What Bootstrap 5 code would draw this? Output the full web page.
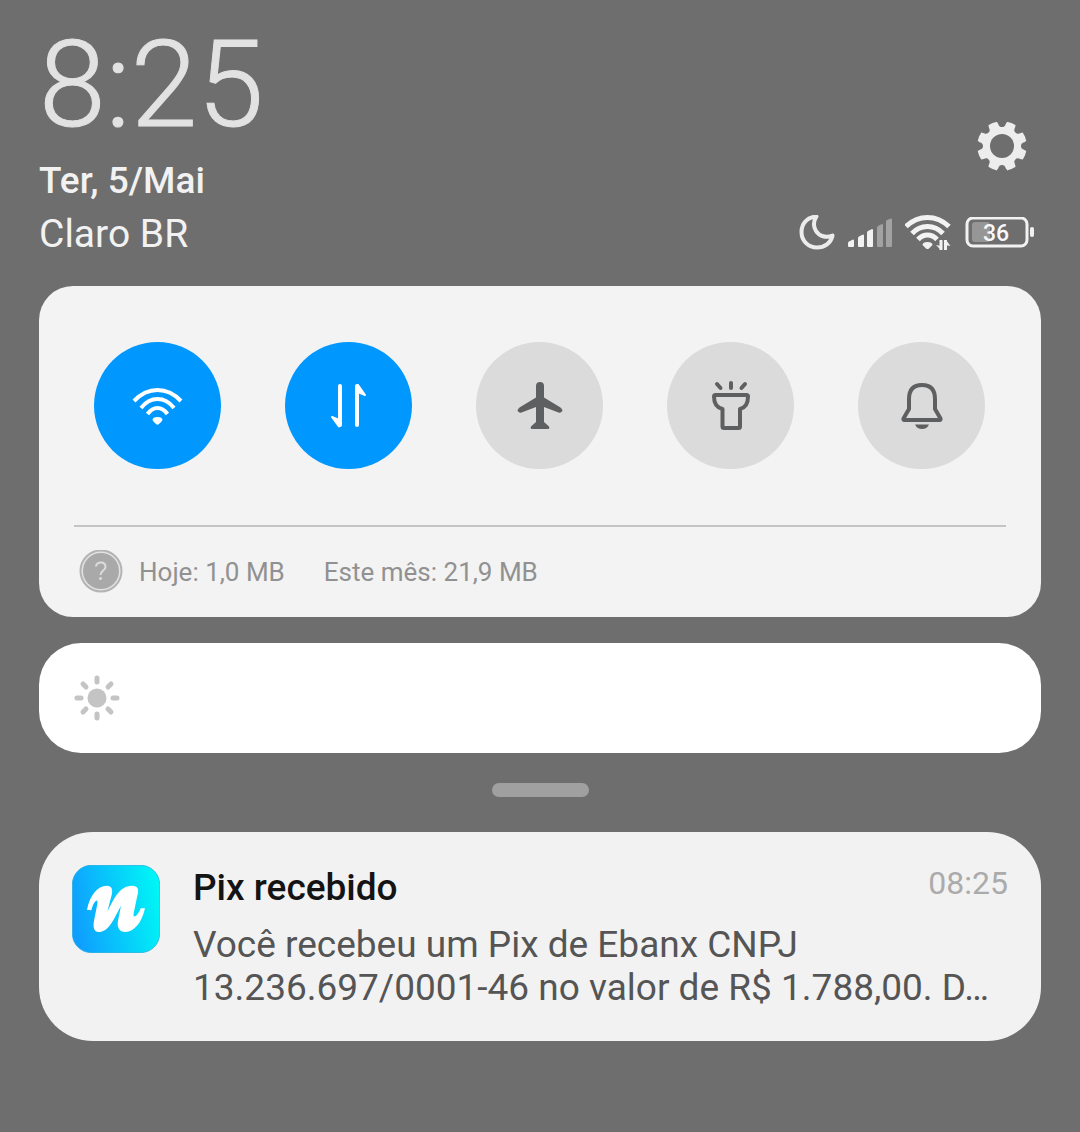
<!DOCTYPE html>
<html lang="pt-BR">
<head>
<meta charset="utf-8">
<meta name="viewport" content="width=device-width, initial-scale=1">
<title>Central de notificações</title>
<link href="https://cdn.jsdelivr.net/npm/bootstrap@5.3.0/dist/css/bootstrap.min.css" rel="stylesheet">
<style>
  body { background: #6e6e6e; color: #f2f2f2; font-family: Roboto, "Liberation Sans", sans-serif; }
  svg { display: block; flex: none; }
  .shade { padding: 21px 39px 0; }
  .clock { font-size: 120px; line-height: 128px; font-weight: 300; color: #e2e2e2; -webkit-text-stroke: 1px #e2e2e2; }
  .today { font-size: 37px; line-height: 52px; font-weight: 500; margin-top: 6px; }
  .carrier { font-size: 39px; line-height: 54px; }
  .top-right { padding-right: 6px; gap: 44px; }
  .status { gap: 13px; padding-bottom: 10px; }
  .settings { margin-right: 8px; }
  .panel { background: #f3f3f3; border-radius: 34px; margin-top: 25px; padding: 56px 35px 0; }
  .toggles { padding: 0 21px 56px 20px; }
  .toggle { width: 127px; height: 127px; background: #dbdbdb; color: #5e5f60; }
  .toggle.active { background: #0098ff; color: #fff; }
  .usage { border-top: 2px solid #c3c4c3; height: 92px; padding: 0 5px; font-size: 26px; color: #919191; }
  .usage-month { margin-left: 39px; }
  .brightness { background: #fff; height: 110px; border-radius: 42px; margin-top: 26px; padding: 0 35px; color: #c4c4c4; }
  .level { appearance: none; background: transparent; height: 60px; }
  .level::-webkit-slider-thumb { appearance: none; width: 1px; height: 60px; background: transparent; }
  .grip { width: 97px; height: 14px; border-radius: 7px; background: #a0a0a0; margin: 30px auto 35px; }
  .notice { background: #f2f2f2; border-radius: 54px; padding: 33px 33px 32px; gap: 33px; }
  .notice-title { font-size: 37px; line-height: 46px; font-weight: 500; color: #141414; }
  .notice-time { font-size: 32px; line-height: 36px; color: #ababab; }
  .notice-text { font-size: 37px; line-height: 43px; color: #555; margin: 12px 0 0; }
</style>
</head>
<body>
<main class="shade">
  <header class="d-flex justify-content-between align-items-end">
    <div>
      <div class="clock">8:25</div>
      <div class="today">Ter, 5/Mai</div>
      <div class="carrier">Claro BR</div>
    </div>
    <div class="top-right d-flex flex-column align-items-end">
      <button class="settings btn p-0 border-0" type="button" aria-label="Configurações">
        <svg width="50" height="50" viewBox="-25 -25 50 50">
          <defs>
            <path id="notch" d="M-5.500-27L-4.800-23.600C-3.200-22.600-3.800-19 0-19S3.200-22.600 4.800-23.600L5.500-27Z"/>
            <mask id="gear" maskUnits="userSpaceOnUse" x="-25" y="-25" width="50" height="50">
              <circle r="24.800" fill="#fff"/><circle r="12"/>
              <use href="#notch"/><use href="#notch" transform="rotate(45)"/><use href="#notch" transform="rotate(90)"/><use href="#notch" transform="rotate(135)"/>
              <use href="#notch" transform="rotate(180)"/><use href="#notch" transform="rotate(225)"/><use href="#notch" transform="rotate(270)"/><use href="#notch" transform="rotate(315)"/>
            </mask>
          </defs>
          <rect x="-25" y="-25" width="50" height="50" fill="#ededed" mask="url(#gear)"/>
        </svg>
      </button>
      <div class="status d-flex align-items-center">
        <svg width="36" height="36" viewBox="0 1 36 36" fill="none" stroke="#ececec" stroke-width="4" stroke-linejoin="round">
          <path d="M17.500 2.500C8 3 2.500 10 2.500 18C2.500 27 9.500 33.500 18 33.500C25.500 33.500 32 29 33.500 21.500C27 24.500 20 22 17 17C14 12 14.500 7 17.500 2.500Z"/>
        </svg>
        <svg width="44" height="30" viewBox="0 1 44 30" fill="#f2f2f2">
          <path d="M0 29V26Q0 25 1 24.500L5 22.500Q6 22.500 6 23.500V29Q6 30 5 30H1Q0 30 0 29Z"/>
          <path d="M10 29V21Q10 20 11 19.500L15 17.500Q16 17.500 16 18.500V29Q16 30 15 30H11Q10 30 10 29Z"/>
          <path d="M19 29V15.500Q19 14.500 20 14L24 12Q25 12 25 13V29Q25 30 24 30H20Q19 30 19 29Z"/>
          <path fill="#a2a2a2" d="M29 29V10.500Q29 9.500 30 9L34 7Q35 7 35 8V29Q35 30 34 30H30Q29 30 29 29Z"/>
          <path fill="#a2a2a2" d="M38 29V5Q38 3.500 39 3L43 1.500Q44 1.500 44 2.500V29Q44 30 43 30H39Q38 30 38 29Z"/>
        </svg>
        <svg width="47" height="36" viewBox="1 1 47 36" fill="none" stroke="#f2f2f2" stroke-width="5">
          <path d="M2 12.500Q11.500 3.500 23.500 3.500T45 12.500M8 19.500Q14.500 12.500 23.500 12.500T39 19.500M14 25.500Q18 21 23.500 21T33 25.500"/>
          <path fill="#f2f2f2" stroke="none" d="M18.500 31Q18.500 28 23.500 28T28.500 31L25 34.500Q23.500 35.500 22 34.500Z"/>
          <path stroke-width="3" d="M37 26V36M41.500 26V36"/>
          <path fill="#f2f2f2" stroke="none" d="M32 31L37 32V36ZM41 26H42L46.500 32L41 31Z"/>
        </svg>
        <svg width="70" height="32" viewBox="0 1 70 32">
          <rect x="7" y="6" width="18" height="20" rx="3" fill="#969696"/>
          <rect x="2" y="2" width="60" height="28" rx="6" fill="none" stroke="#f2f2f2" stroke-width="3"/>
          <rect x="65" y="11" width="4" height="10" rx="2" fill="#f2f2f2"/>
          <text x="31" y="25" text-anchor="middle" font-size="23" font-weight="500" fill="#f8f8f8">36</text>
        </svg>
      </div>
    </div>
  </header>

  <section class="panel">
    <div class="toggles d-flex justify-content-between">
      <button class="toggle active btn rounded-circle border-0 p-0 d-flex align-items-center justify-content-center" type="button" aria-label="Wi-Fi" aria-pressed="true">
        <svg width="51" height="41" viewBox="0 0 51 41" fill="none" stroke="currentColor" stroke-width="4">
          <path d="M2 16Q12.500 5 25.500 5T49 16M9 23Q16 14 25.500 14T42 23M15.500 29Q20 23 25.500 23T35.500 29"/>
          <path fill="currentColor" stroke="none" d="M20.500 35Q20.500 32 25.500 32T30.500 35Q29.500 37 27 39Q25.500 40.500 24 39Q21.500 37 20.500 35Z"/>
        </svg>
      </button>
      <button class="toggle active btn rounded-circle border-0 p-0 d-flex align-items-center justify-content-center" type="button" aria-label="Dados móveis" aria-pressed="true">
        <svg width="37" height="45" viewBox="0 0 37 45" fill="none" stroke="currentColor" stroke-width="4" stroke-linecap="round" stroke-linejoin="round">
          <path d="M10 3V42M27 42V3"/>
          <path fill="currentColor" stroke-width="2" d="M2 34L9 37V43.500ZM28 2L35 12L28 9Z"/>
        </svg>
      </button>
      <button class="toggle btn rounded-circle border-0 p-0 d-flex align-items-center justify-content-center" type="button" aria-label="Modo avião" aria-pressed="false">
        <svg width="46" height="50" viewBox="0 0 46 50" fill="currentColor">
          <path d="M19 5Q19 1 23 1T27 5V16.500L43.500 26.500Q46 28.500 45 30.500Q44 32 41.500 31.500L27 26V41L32 45.500Q33 48 31 48H15Q13 48 14 45.500L19 41V26L4.500 31.500Q2 32 1 30.500Q0 28.500 2.500 26.500L19 16.500Z"/>
        </svg>
      </button>
      <button class="toggle btn rounded-circle border-0 p-0 d-flex align-items-center justify-content-center" type="button" aria-label="Lanterna" aria-pressed="false">
        <svg width="38" height="50" viewBox="0 0 38 50" fill="none" stroke="currentColor" stroke-width="4" stroke-linejoin="round" stroke-linecap="round">
          <path d="M5 3L8.500 7M19 2V7M33 3L29.500 7M3.500 14H34.500Q36 14 36 15.500Q36 26 28 28V45.500Q28 47 26.500 47H12Q10.500 47 10.500 45.500V28Q2 26 2 15.500Q2 14 3.500 14Z"/>
        </svg>
      </button>
      <button class="toggle btn rounded-circle border-0 p-0 d-flex align-items-center justify-content-center" type="button" aria-label="Silencioso" aria-pressed="false">
        <svg width="42" height="48" viewBox="0 0 42 48" fill="none" stroke="currentColor" stroke-width="4" stroke-linejoin="round">
          <path d="M8 17Q8 3 21 3T34 17V27L39.500 36.500Q40 38 38.500 38H3.500Q2 38 2.500 36.500L8 27Z"/>
          <path fill="currentColor" stroke="none" d="M14 42.500H28Q26 47 21 47T14 42.500Z"/>
        </svg>
      </button>
    </div>
    <div class="usage d-flex align-items-center">
      <svg width="44" height="44" viewBox="0 1 44 44" fill="none">
        <circle cx="22" cy="22" r="20.500" fill="#e2e2e2" stroke="#b4b4b4" stroke-width="2"/>
        <circle cx="22" cy="22" r="18" fill="#a9a9a9"/>
        <path d="M17 17.500Q17.500 13.500 22 13.500T26.500 18C26.500 21.500 21.500 21.500 21.500 26" stroke="#dcdcdc" stroke-width="2"/>
        <circle cx="21.500" cy="29.500" r="1.500" fill="#dcdcdc"/>
      </svg>
      <span class="ms-3">Hoje: 1,0 MB</span>
      <span class="usage-month">Este mês: 21,9 MB</span>
    </div>
  </section>

  <section class="brightness d-flex align-items-center">
    <label for="level" aria-label="Brilho">
      <svg width="46" height="46" viewBox="-23 -23 46 46" fill="currentColor" stroke="currentColor" stroke-width="5" stroke-linecap="round">
        <circle r="9.500" stroke="none"/>
        <path d="M0-20V-16M0 20V16M-20 0H-16M20 0H16M-14-14L-11-11M14 14L11 11M14-14L11-11M-14 14L-11 11"/>
      </svg>
    </label>
    <input class="level flex-grow-1" id="level" type="range" min="0" max="100" value="0">
  </section>

  <div class="grip"></div>

  <article class="notice d-flex align-items-start">
    <svg width="88" height="88" viewBox="0 0 264 264">
      <defs>
        <linearGradient id="brand" x1="0" y1="0.600" x2="1" y2="0.400">
          <stop offset="0" stop-color="#0f9dff"/><stop offset="1" stop-color="#00f5f6"/>
        </linearGradient>
      </defs>
      <rect x="1" y="1" width="262" height="262" rx="57" fill="url(#brand)" stroke="#1ba9d8" stroke-width="2"/>
      <path fill="#fff" d="M45 134C54 90 77 62 104 62C120 62 123 74 119 90L106 140C124 104 142 62 180 62C198 62 202 74 196 92L185 145C182 162 196 156 206 130H219C210 172 187 201 160 201C142 201 134 186 138 167L147 122C130 152 113 201 80 201C64 201 63 182 66 167L76 117C79 98 66 106 58 136Z"/>
    </svg>
    <div class="flex-grow-1">
      <div class="d-flex justify-content-between align-items-start">
        <div class="notice-title">Pix recebido</div>
        <time class="notice-time">08:25</time>
      </div>
      <p class="notice-text">Você recebeu um Pix de Ebanx CNPJ 13.236.697/0001-46 no valor de R$ 1.788,00. D…</p>
    </div>
  </article>
</main>
<script src="https://cdn.jsdelivr.net/npm/bootstrap@5.3.0/dist/js/bootstrap.bundle.min.js"></script>
</body>
</html>
